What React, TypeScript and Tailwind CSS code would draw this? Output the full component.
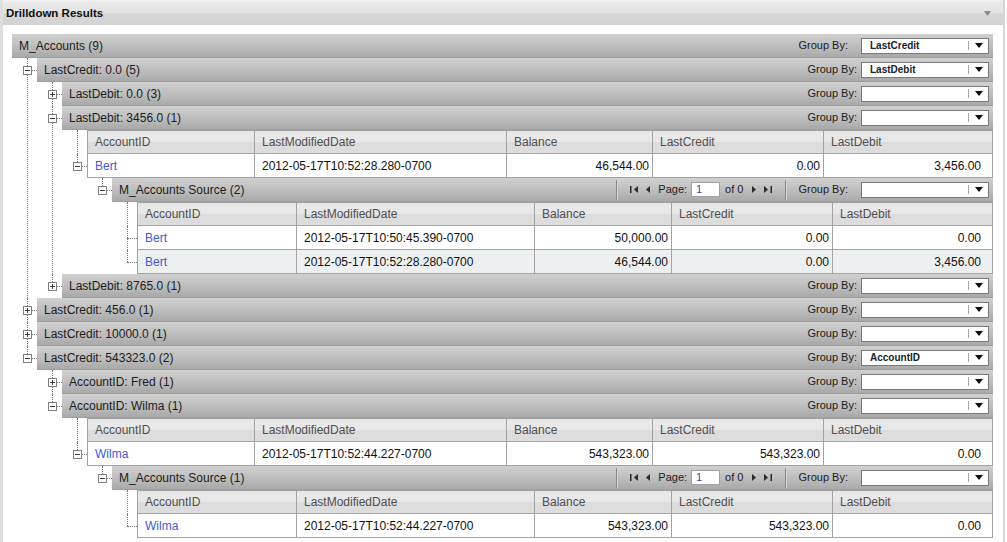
import React from 'react';

type Marker = 'plus' | 'minus' | 'line' | 'none';
type TableKind = 'outer' | 'inner';
type Node =
  | { kind: 'bar'; variant: 'root' | 'group' | 'source'; label: string; groupBy?: string; marker: Marker; children?: Node[] }
  | { kind: 'thead'; table: TableKind; marker: Marker; children?: Node[] }
  | { kind: 'trow'; table: TableKind; cells: string[]; alt?: boolean; marker: Marker; children?: Node[] };

const COLS = ['AccountID', 'LastModifiedDate', 'Balance', 'LastCredit', 'LastDebit'];

function Toggle({ open }: { open: boolean }) {
  return (
    <svg width="9" height="9" viewBox="0 0 9 9" className="absolute left-[-14px] top-[8px]">
      <rect x="0.5" y="0.5" width="8" height="8" fill="#ffffff" stroke="#7f7f7f" />
      <path d="M2 4.5H7" stroke="#3a3a3a" />
      {!open && <path d="M4.5 2V7" stroke="#3a3a3a" />}
    </svg>
  );
}

function Select({ value }: { value?: string }) {
  return (
    <div className="w-[128px] h-[16px] bg-white border border-[#7a7a7a] flex items-center">
      <span className="flex-1 pl-[8px] text-[10px] font-bold text-[#0f1e2e] leading-none whitespace-nowrap">{value}</span>
      <span className="w-px h-[9px] bg-[#a8a8a8]" />
      <svg width="8" height="5" viewBox="0 0 8 5" className="ml-[6px] mr-[5px]">
        <path d="M0 0H8L4 5Z" fill="#111111" />
      </svg>
    </div>
  );
}

function Sep() {
  return <span className="block w-[2px] h-[20px] border-l border-[#8a8a8a] border-r border-r-[#d4d4d4]" />;
}

function Pager() {
  return (
    <div className="flex items-center text-[11px] text-[#1e1e1e] mr-[11px]">
      <Sep />
      <svg width="9" height="7" viewBox="0 0 9 7" className="ml-[12px]">
        <rect x="0" y="0" width="1.5" height="7" fill="#2a2a2a" />
        <path d="M8 0V7L4 3.5Z" fill="#2a2a2a" />
      </svg>
      <svg width="4" height="7" viewBox="0 0 4 7" className="ml-[7px]">
        <path d="M4 0V7L0 3.5Z" fill="#2a2a2a" />
      </svg>
      <span className="ml-[8px]">Page:</span>
      <div className="ml-[4px] w-[29px] h-[15px] bg-white border border-[#a0a0a0] flex items-center pl-[4px] text-[11px] text-[#4b3f8f] leading-none">1</div>
      <span className="ml-[5px]">of 0</span>
      <svg width="4" height="7" viewBox="0 0 4 7" className="ml-[9px]">
        <path d="M0 0V7L4 3.5Z" fill="#2a2a2a" />
      </svg>
      <svg width="9" height="7" viewBox="0 0 9 7" className="ml-[8px]">
        <path d="M0 0V7L4 3.5Z" fill="#2a2a2a" />
        <rect x="6.5" y="0" width="1.5" height="7" fill="#2a2a2a" />
      </svg>
      <span className="ml-[12px]"><Sep /></span>
    </div>
  );
}

function Bar({ node }: { node: Extract<Node, { kind: 'bar' }> }) {
  return (
    <div className="h-[24px] flex items-center pl-[7px] pr-[4px] bg-[linear-gradient(to_bottom,#d0d0d0,#bfbfbf_50%,#a9a9a9)] border-b border-[#9d9d9d]">
      <span className="flex-1 text-[12px] text-[#1c1c1c] whitespace-nowrap">{node.label}</span>
      {node.variant === 'source' && <Pager />}
      <span className="text-[11px] text-[#1c1c1c] whitespace-nowrap">Group By:</span>
      <div className={node.variant === 'group' ? 'ml-[4px]' : 'ml-[13px]'}>
        <Select value={node.groupBy} />
      </div>
    </div>
  );
}

function gridFor(t: TableKind) {
  return t === 'outer'
    ? 'grid grid-cols-[166px_252px_146px_171px_1fr]'
    : 'grid grid-cols-[158px_238px_137px_161px_1fr]';
}

function THead({ table }: { table: TableKind }) {
  return (
    <div className={gridFor(table) + ' h-[24px] border border-[#a3a3a3] bg-[linear-gradient(to_bottom,#e8e8e8_50%,#dddddd_50%)]'}>
      {COLS.map((c, i) => (
        <div key={c} className={(i > 0 ? 'border-l border-[#a3a3a3] ' : '') + 'flex items-center pl-[7px] text-[12px] text-[#4f4f4f] whitespace-nowrap'}>
          {c}
        </div>
      ))}
    </div>
  );
}

function TRow({ table, cells, alt }: { table: TableKind; cells: string[]; alt?: boolean }) {
  return (
    <div className={gridFor(table) + ' h-[24px] border-x border-b border-[#a3a3a3] ' + (alt ? 'bg-[#edf0f0]' : 'bg-white')}>
      {cells.map((c, i) => {
        let cls = 'flex items-center text-[12px] whitespace-nowrap ';
        if (i > 0) cls += 'border-l border-[#a3a3a3] ';
        if (i === 0) cls += 'pl-[7px] text-[#3f5bd5]';
        else if (i === 1) cls += 'pl-[7px] text-[#111111]';
        else if (i === 4) cls += 'justify-end pr-[11px] text-[#111111]';
        else cls += 'justify-end pr-[3px] text-[#111111]';
        return (
          <div key={i} className={cls}>
            {c}
          </div>
        );
      })}
    </div>
  );
}

function Header({ node }: { node: Node }) {
  if (node.kind === 'bar') return <Bar node={node} />;
  if (node.kind === 'thead') return <THead table={node.table} />;
  return <TRow table={node.table} cells={node.cells} alt={node.alt} />;
}

function Children({ nodes }: { nodes?: Node[] }) {
  if (!nodes || nodes.length === 0) return null;
  return (
    <div className="pl-[25px]">
      {nodes.map((n, i) => (
        <Item key={i} node={n} last={i === nodes.length - 1} />
      ))}
    </div>
  );
}

function Item({ node, last }: { node: Node; last: boolean }) {
  return (
    <div className="relative">
      <span
        className={
          last
            ? 'absolute left-[-10px] top-0 h-[12px] border-l border-dotted border-[#777777]'
            : 'absolute left-[-10px] top-0 bottom-0 border-l border-dotted border-[#777777]'
        }
      />
      {node.marker !== 'none' && (
        <span className="absolute left-[-10px] top-[12px] w-[10px] border-t border-dotted border-[#777777]" />
      )}
      {(node.marker === 'plus' || node.marker === 'minus') && <Toggle open={node.marker === 'minus'} />}
      <Header node={node} />
      <Children nodes={node.children} />
    </div>
  );
}

const innerHead: Node = { kind: 'thead', table: 'inner', marker: 'none' };
const outerHead: Node = { kind: 'thead', table: 'outer', marker: 'none' };

const root: Extract<Node, { kind: 'bar' }> = {
  kind: 'bar',
  variant: 'root',
  label: 'M_Accounts (9)',
  groupBy: 'LastCredit',
  marker: 'none',
  children: [
    {
      kind: 'bar',
      variant: 'group',
      label: 'LastCredit: 0.0 (5)',
      groupBy: 'LastDebit',
      marker: 'minus',
      children: [
        { kind: 'bar', variant: 'group', label: 'LastDebit: 0.0 (3)', marker: 'plus' },
        {
          kind: 'bar',
          variant: 'group',
          label: 'LastDebit: 3456.0 (1)',
          marker: 'minus',
          children: [
            outerHead,
            {
              kind: 'trow',
              table: 'outer',
              marker: 'minus',
              cells: ['Bert', '2012-05-17T10:52:28.280-0700', '46,544.00', '0.00', '3,456.00'],
              children: [
                {
                  kind: 'bar',
                  variant: 'source',
                  label: 'M_Accounts Source (2)',
                  marker: 'minus',
                  children: [
                    innerHead,
                    {
                      kind: 'trow',
                      table: 'inner',
                      marker: 'line',
                      cells: ['Bert', '2012-05-17T10:50:45.390-0700', '50,000.00', '0.00', '0.00'],
                    },
                    {
                      kind: 'trow',
                      table: 'inner',
                      marker: 'line',
                      alt: true,
                      cells: ['Bert', '2012-05-17T10:52:28.280-0700', '46,544.00', '0.00', '3,456.00'],
                    },
                  ],
                },
              ],
            },
          ],
        },
        { kind: 'bar', variant: 'group', label: 'LastDebit: 8765.0 (1)', marker: 'plus' },
      ],
    },
    { kind: 'bar', variant: 'group', label: 'LastCredit: 456.0 (1)', marker: 'plus' },
    { kind: 'bar', variant: 'group', label: 'LastCredit: 10000.0 (1)', marker: 'plus' },
    {
      kind: 'bar',
      variant: 'group',
      label: 'LastCredit: 543323.0 (2)',
      groupBy: 'AccountID',
      marker: 'minus',
      children: [
        { kind: 'bar', variant: 'group', label: 'AccountID: Fred (1)', marker: 'plus' },
        {
          kind: 'bar',
          variant: 'group',
          label: 'AccountID: Wilma (1)',
          marker: 'minus',
          children: [
            outerHead,
            {
              kind: 'trow',
              table: 'outer',
              marker: 'minus',
              cells: ['Wilma', '2012-05-17T10:52:44.227-0700', '543,323.00', '543,323.00', '0.00'],
              children: [
                {
                  kind: 'bar',
                  variant: 'source',
                  label: 'M_Accounts Source (1)',
                  marker: 'minus',
                  children: [
                    innerHead,
                    {
                      kind: 'trow',
                      table: 'inner',
                      marker: 'line',
                      cells: ['Wilma', '2012-05-17T10:52:44.227-0700', '543,323.00', '543,323.00', '0.00'],
                    },
                  ],
                },
              ],
            },
          ],
        },
      ],
    },
  ],
};

export default function App() {
  return (
    <div className="w-[1007px] h-[542px] overflow-hidden bg-white font-['Liberation_Sans',Arial,sans-serif]">
      <div className="w-[1005px] h-full border-l-[3px] border-l-[#dedede] border-r-[2px] border-r-[#d6d6d6] flex flex-col">
        <div className="h-[25px] shrink-0 flex items-center justify-between pl-[3px] pr-[12px] border-t-2 border-t-[#f0f0f0] bg-[linear-gradient(to_bottom,#e9e9e9,#e3e3e3_50%,#d7d7d7_50%,#d3d3d3)]">
          <span className="text-[11.5px] font-bold text-[#111111]">Drilldown Results</span>
          <svg width="7" height="5" viewBox="0 0 7 5">
            <path d="M0 0H7L3.5 5Z" fill="#8a8a8a" />
          </svg>
        </div>
        <div className="pt-[9px] pl-[9px] pr-[10px]">
          <Bar node={root} />
          <Children nodes={root.children} />
        </div>
      </div>
    </div>
  );
}
